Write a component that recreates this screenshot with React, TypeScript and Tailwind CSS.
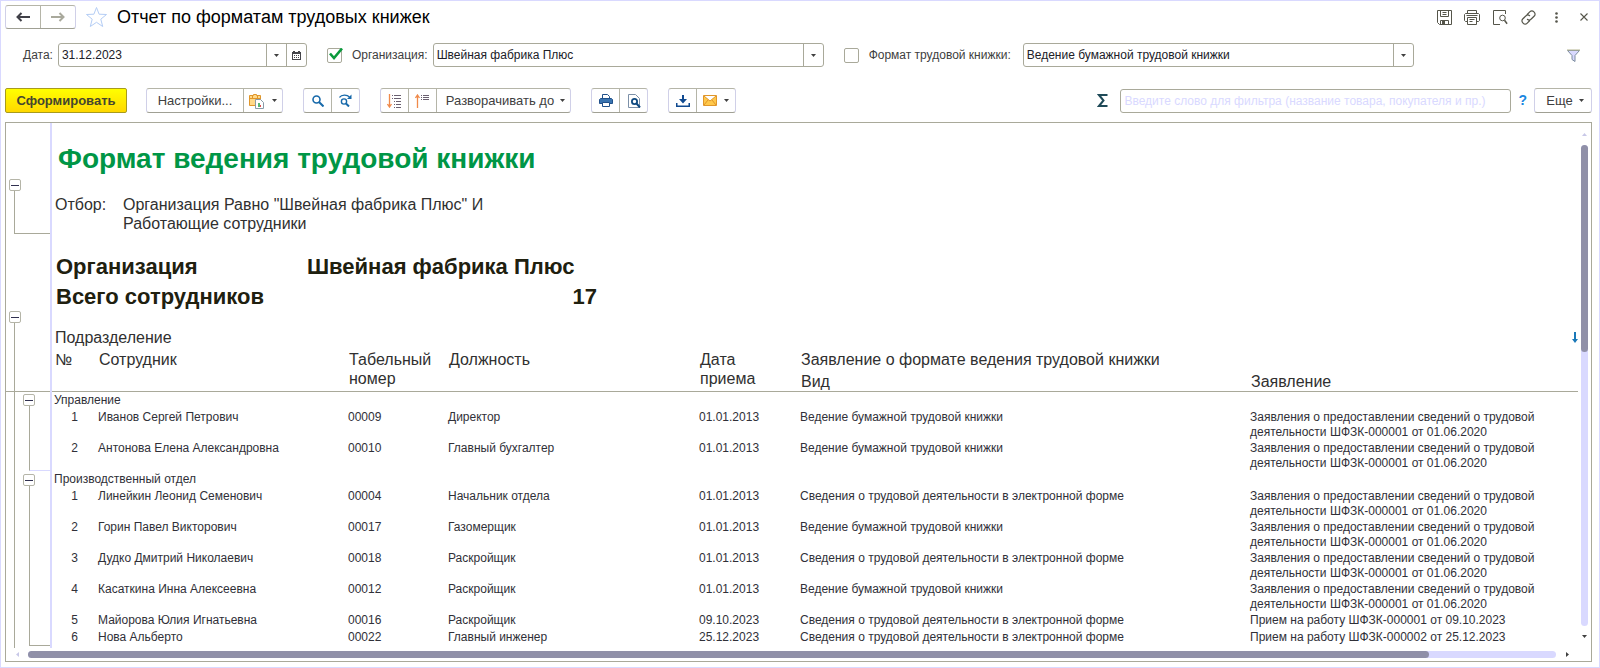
import type { ReactNode } from 'react';

type Employee = {
  name: string;
  code: string;
  position: string;
  hired: string;
  kind: string;
  statement: string[];
};

const PAPER = 'Ведение бумажной трудовой книжки';
const ELECTRONIC = 'Сведения о трудовой деятельности в электронной форме';
const REQUEST = ['Заявления о предоставлении сведений о трудовой', 'деятельности ШФЗК-000001 от 01.06.2020'];

const departments: { title: string; employees: Employee[] }[] = [
  {
    title: 'Управление',
    employees: [
      { name: 'Иванов Сергей Петрович', code: '00009', position: 'Директор', hired: '01.01.2013', kind: PAPER, statement: REQUEST },
      { name: 'Антонова Елена Александровна', code: '00010', position: 'Главный бухгалтер', hired: '01.01.2013', kind: PAPER, statement: REQUEST },
    ],
  },
  {
    title: 'Производственный отдел',
    employees: [
      { name: 'Линейкин Леонид Семенович', code: '00004', position: 'Начальник отдела', hired: '01.01.2013', kind: ELECTRONIC, statement: REQUEST },
      { name: 'Горин Павел Викторович', code: '00017', position: 'Газомерщик', hired: '01.01.2013', kind: PAPER, statement: REQUEST },
      { name: 'Дудко Дмитрий Николаевич', code: '00018', position: 'Раскройщик', hired: '01.01.2013', kind: ELECTRONIC, statement: REQUEST },
      { name: 'Касаткина Инна Алексеевна', code: '00012', position: 'Раскройщик', hired: '01.01.2013', kind: PAPER, statement: REQUEST },
      { name: 'Майорова Юлия Игнатьевна', code: '00016', position: 'Раскройщик', hired: '09.10.2023', kind: ELECTRONIC, statement: ['Прием на работу ШФЗК-000001 от 09.10.2023'] },
      { name: 'Нова Альберто', code: '00022', position: 'Главный инженер', hired: '25.12.2023', kind: ELECTRONIC, statement: ['Прием на работу ШФЗК-000002 от 25.12.2023'] },
    ],
  },
];

export default function App() {
  return (
    <div className="border border-[#d9d9ff] bg-white pt-1 pr-[7px] pb-[5px] pl-1 font-['Liberation_Sans',Arial,sans-serif] text-[13px] text-[#404040]">
      <TitleBar />
      <Filters />
      <Toolbar />
      <Report />
    </div>
  );
}

function TitleBar() {
  return (
    <header className="flex h-6 items-center">
      <ButtonGroup>
        <ToolButton label="Назад" className="w-[34px]">
          <svg width="14" height="10" viewBox="0 0 14 10" fill="none" stroke="#404048" strokeWidth="2">
            <path d="M1.5 5H14M5.5 1 1.5 5l4 4" />
          </svg>
        </ToolButton>
        <ToolButton label="Вперед" className="w-[34px]">
          <svg width="14" height="10" viewBox="0 0 14 10" fill="none" stroke="#a9a99c" strokeWidth="2">
            <path d="M12.500 5H0M8.500 1l4 4-4 4" />
          </svg>
        </ToolButton>
      </ButtonGroup>
      <button type="button" aria-label="Избранное" className="ml-[9px]">
        <svg width="23" height="22" viewBox="0 0 23 22" fill="none" stroke="#b4cdf5" strokeWidth="1">
          <path d="M11.500 1.500l2.600 6.700 7.400.3-5.700 4.700 1.900 7.300-6.200-4.200-6.200 4.200 1.900-7.300L1.500 8.500l7.400-.3z" />
        </svg>
      </button>
      <h1 className="ml-[9px] text-[18px] text-black">Отчет по форматам трудовых книжек</h1>
      <div className="ml-auto flex items-center gap-3 text-[#55554a]">
        <TitleButton label="Сохранить">
          <svg width="15" height="15" viewBox="0 0 15 15" fill="none" stroke="currentColor">
            <path d="M.5.5h14v14h-12l-2-2zM3.500.5v6h8v-6M5.500 2.500h4M5.500 4.500h4M3.500 14.500v-4h8v4" />
            <path d="M5 11h3v3H5z" fill="currentColor" stroke="none" />
          </svg>
        </TitleButton>
        <TitleButton label="Печать">
          <svg width="16" height="15" viewBox="0 0 16 15" fill="none" stroke="currentColor">
            <path d="M3.500 3.500v-3h9v3M3.500 11.500h-2l-1-1v-6l1-1h13l1 1v6l-1 1h-2M2.500 5.500h11M3.500 7.500h9v7h-9zM5.500 9.500h5M5.500 11.500h3" />
          </svg>
        </TitleButton>
        <TitleButton label="Предварительный просмотр">
          <svg width="15" height="15" viewBox="0 0 15 15" fill="none" stroke="currentColor">
            <path d="M12.500 4V.5H.5v14H7" />
            <circle cx="9.500" cy="8" r="2.800" />
            <path d="m11.500 10.200 2.600 3.600" strokeWidth="1.500" />
          </svg>
        </TitleButton>
        <TitleButton label="Ссылка">
          <svg width="15" height="15" viewBox="0 0 15 15" fill="none" stroke="currentColor" strokeWidth="1.200" strokeLinecap="round">
            <path d="M6.200 4.500 9 1.700a2.600 2.600 0 0 1 3.700 0l.6.6a2.600 2.600 0 0 1 0 3.700L10 9.200a2.600 2.600 0 0 1-3.600.1M8.800 10.500 6 13.300a2.600 2.600 0 0 1-3.700 0l-.6-.6a2.600 2.600 0 0 1 0-3.700L5 5.800a2.600 2.600 0 0 1 3.600-.1" />
          </svg>
        </TitleButton>
        <TitleButton label="Меню">
          <svg width="3" height="11" viewBox="0 0 3 11" fill="currentColor">
            <circle cx="1.500" cy="1.500" r="1.300" />
            <circle cx="1.500" cy="5.500" r="1.300" />
            <circle cx="1.500" cy="9.500" r="1.300" />
          </svg>
        </TitleButton>
        <TitleButton label="Закрыть">
          <svg width="8" height="8" viewBox="0 0 8 8" stroke="currentColor" strokeWidth="1.100">
            <path d="m.5.5 7 7m0-7-7 7" />
          </svg>
        </TitleButton>
      </div>
    </header>
  );
}

function TitleButton({ label, children }: { label: string; children: ReactNode }) {
  return (
    <button type="button" aria-label={label} className="flex w-4 justify-center">
      {children}
    </button>
  );
}

function Filters() {
  return (
    <form className="mt-[14px] flex items-center pr-3 pl-[18px] text-[12px]">
      <label htmlFor="date" className="mr-[5px]">Дата:</label>
      <div className="flex h-6 w-[249px] rounded-[3px] border border-[#a9a99a]">
        <input id="date" defaultValue="31.12.2023" className="min-w-0 flex-1 pl-[3px] text-[#202028] outline-none" />
        <button type="button" aria-label="Выбрать" className="flex w-5 items-center justify-center border-l border-[#a9a99a]">
          <Caret />
        </button>
        <button type="button" aria-label="Календарь" className="flex w-5 items-center justify-center border-l border-[#a9a99a]">
          <svg width="9" height="9" viewBox="0 0 9 9" fill="#45454a">
            <path d="M1 0h2v1h3V0h2v1h1v8H0V1h1zM1 3v5h7V3z" fillRule="evenodd" />
            <path d="M2 4h1v1H2zM4 4h1v1H4zM6 4h1v1H6zM2 6h1v1H2zM4 6h1v1H4zM6 6h1v1H6z" />
          </svg>
        </button>
      </div>

      <Tick id="org-on" label="Использовать организацию" checked />
      <label htmlFor="org" className="mr-[5px] ml-[10px]">Организация:</label>
      <SelectField id="org" value="Швейная фабрика Плюс" />

      <Tick id="format-on" label="Использовать формат" />
      <label htmlFor="format" className="mr-3 ml-[10px]">Формат трудовой книжки:</label>
      <SelectField id="format" value={PAPER} />

      <button type="button" aria-label="Фильтр" className="ml-auto">
        <svg width="13" height="13" viewBox="0 0 13 13" fill="#d9d9ff" stroke="#7c8ca0">
          <path d="M.5 1.500h12l-4.500 5v6l-3-2v-4z" />
          <path d="M0 1h13" stroke="#b5b590" />
        </svg>
      </button>
    </form>
  );
}

function Tick({ id, label, checked = false }: { id: string; label: string; checked?: boolean }) {
  return (
    <span className="relative ml-5 flex">
      <input
        id={id}
        type="checkbox"
        aria-label={label}
        defaultChecked={checked}
        className="peer size-[15px] appearance-none rounded-[2px] border border-[#a9a99a]"
      />
      <svg width="14" height="12" viewBox="0 0 14 12" fill="none" stroke="#0a9a3c" strokeWidth="2.600" className="pointer-events-none absolute bottom-[3px] left-[2px] hidden peer-checked:block">
        <path d="M1 5.500 5 10l8-9.500" />
      </svg>
    </span>
  );
}

function SelectField({ id, value }: { id: string; value: string }) {
  return (
    <div className="relative flex h-6 max-w-[391px] flex-1 rounded-[3px] border border-[#a9a99a]">
      <select id={id} className="min-w-0 flex-1 appearance-none pl-[3px] text-[#202028] outline-none">
        <option>{value}</option>
      </select>
      <span className="pointer-events-none flex w-5 items-center justify-center border-l border-[#a9a99a]">
        <Caret />
      </span>
    </div>
  );
}

function Toolbar() {
  return (
    <div className="mt-[21px] flex h-[25px] items-center">
      <button type="button" className="h-full w-[122px] rounded-[2px] border border-[#a89b1c] bg-linear-to-b from-[#ffff00] to-[#ffd800] font-bold text-[#45452f]">
        Сформировать
      </button>
      <div className="ml-[19px] flex h-full gap-5">
        <ButtonGroup>
          <ToolButton className="w-24">Настройки...</ToolButton>
          <ToolButton label="Варианты отчета" className="w-[38px] gap-[7px]">
            <svg width="16" height="16" viewBox="0 0 16 16" fill="none">
              <path d="M.5 2.500h4v-1h3v1h4v10H.5z" fill="#ffd98a" stroke="#e0962a" />
              <path d="M.5 5.500h11M3.500 3v2M8.500 3v2" stroke="#e0962a" />
              <path d="M6.500 6.500h5l3 3v6h-8z" fill="#fff" stroke="#8a9aa8" />
              <path d="M9 10h2v4H9z" fill="#58b878" />
              <path d="M11 12h1v2h-1z" fill="#e05050" />
            </svg>
            <Caret />
          </ToolButton>
        </ButtonGroup>
        <ButtonGroup>
          <ToolButton label="Найти" className="w-[27px]">
            <svg width="12" height="12" viewBox="0 0 12 12" fill="none" stroke="#1769aa">
              <circle cx="4.500" cy="4.500" r="3.500" strokeWidth="1.600" />
              <path d="m7 7 4.500 4.500" strokeWidth="2" />
            </svg>
          </ToolButton>
          <ToolButton label="Найти далее" className="w-[27px]">
            <svg width="13" height="13" viewBox="0 0 13 13" fill="none" stroke="#1769aa">
              <circle cx="5" cy="7.500" r="2.600" strokeWidth="1.400" />
              <path d="m7 9.500 3 3" strokeWidth="2" />
              <path d="M.5 3.500C2.500.5 8 .5 10.500 3" strokeWidth="1.300" />
              <path d="M12.500.5v4.500H8z" fill="#1769aa" stroke="none" />
            </svg>
          </ToolButton>
        </ButtonGroup>
        <ButtonGroup>
          <ToolButton label="Развернуть группы" className="w-[27px]">
            <svg width="15" height="14" viewBox="0 0 15 14" fill="none">
              <path d="M2.500 0v13M.5 10l2 3 2-3" stroke="#f08a4a" strokeWidth="1.300" />
              <path d="M5 1.500h1M7 1.500h7M5 4.500h1M7 4.500h7M7 7.500h1M9 7.500h5M7 10.500h1M9 10.500h5M7 13.500h1M9 13.500h5" stroke="#6a6070" />
            </svg>
          </ToolButton>
          <ToolButton label="Свернуть группы" className="w-[27px]">
            <svg width="15" height="14" viewBox="0 0 15 14" fill="none">
              <path d="M2.500 1v13M.5 4l2-3 2 3" stroke="#f08a4a" strokeWidth="1.300" />
              <path d="M6 1.500h1M8 1.500h6M6 3.500h1M8 3.500h6M6 5.500h1M8 5.500h6" stroke="#6a6070" />
            </svg>
          </ToolButton>
          <ToolButton className="w-[129px] gap-[6px] pl-1">
            Разворачивать до
            <Caret />
          </ToolButton>
        </ButtonGroup>
        <ButtonGroup>
          <ToolButton label="Печать" className="w-[27px]">
            <svg width="14" height="13" viewBox="0 0 14 13" fill="none" stroke="#20508a">
              <path d="M3.500 4.500v-4h5l2 2v2" fill="#fff" />
              <path d="M1.500 4.500h11l1 1v4H.5v-4z" fill="#3a74b0" />
              <path d="M3.500 8.500h7v4h-7z" fill="#fff" />
            </svg>
          </ToolButton>
          <ToolButton label="Предварительный просмотр" className="w-[27px]">
            <svg width="14" height="14" viewBox="0 0 14 14" fill="none">
              <path d="M1.500.5h7l4 4v9h-11z" stroke="#7c90a8" />
              <circle cx="7.500" cy="7.500" r="2.600" stroke="#104a80" strokeWidth="1.800" />
              <path d="m9.500 9.500 3.500 4" stroke="#104a80" strokeWidth="2" />
            </svg>
          </ToolButton>
        </ButtonGroup>
        <ButtonGroup>
          <ToolButton label="Сохранить" className="w-[27px]">
            <svg width="14" height="12" viewBox="0 0 14 12" fill="#104a90">
              <path d="M6 0h2v4h3L7 8.500 3 4h3z" />
              <path d="M0 8h1.500v2.500h11V8H14v4H0z" />
            </svg>
          </ToolButton>
          <ToolButton label="Отправить" className="w-[38px] gap-[7px]">
            <svg width="14" height="11" viewBox="0 0 14 11" fill="#ffc84a" stroke="#e0962a">
              <path d="M.5.5h13v10H.5zM1 1l6 5 6-5M1 10l4-5M13 10 9 5" />
            </svg>
            <Caret />
          </ToolButton>
        </ButtonGroup>
      </div>

      <svg width="11" height="13" viewBox="0 0 11 13" fill="none" stroke="#1f4a58" strokeWidth="2" className="mr-3 ml-auto">
        <path d="M10.500 1H2l4.500 5.500L2 12h8.500" />
      </svg>
      <input
        aria-label="Фильтр"
        placeholder="Введите слово для фильтра (название товара, покупателя и пр.)"
        className="h-6 w-[391px] rounded-[3px] border border-[#a9a99a] pl-[3px] text-[12px] outline-none placeholder:text-[#d9d9ff]"
      />
      <a href="#help" className="mx-[7px] text-[14px] font-bold text-[#1a86e0]">?</a>
      <ButtonGroup>
        <ToolButton className="w-[52px] gap-[6px] pl-1">
          Еще
          <Caret />
        </ToolButton>
      </ButtonGroup>
    </div>
  );
}

function ButtonGroup({ children }: { children: ReactNode }) {
  return (
    <div className="flex h-full shrink-0 divide-x divide-[#b5b5a8] rounded-[3px] border border-x-[#d0d0e8] border-t-[#b5b5a8] border-b-[#a0a094]">
      {children}
    </div>
  );
}

function ToolButton({ label, className = '', children }: { label?: string; className?: string; children: ReactNode }) {
  return (
    <button type="button" aria-label={label} className={`box-content flex items-center justify-center whitespace-nowrap ${className}`}>
      {children}
    </button>
  );
}

function Caret() {
  return (
    <svg width="5" height="3" viewBox="0 0 5 3" fill="#404040" className="shrink-0">
      <path d="M0 0h5L2.500 3z" />
    </svg>
  );
}

function Report() {
  return (
    <main className="mt-[9px] border border-[#a9a99a]">
      <div className="flex">
        <Outline />
        <div className="min-w-0 flex-1">
          <h2 className="mt-5 ml-[6px] text-[28px] leading-8 font-bold text-[#009646]">Формат ведения трудовой книжки</h2>
          <div className="mt-5 ml-[3px] flex text-[16px] leading-[19px] text-[#303030]">
            <span className="w-[68px]">Отбор:</span>
            <p>
              Организация Равно "Швейная фабрика Плюс" И
              <br />
              Работающие сотрудники
            </p>
          </div>
          <dl className="mt-[19px] ml-1 grid w-[541px] grid-cols-[251px_1fr] text-[22px] leading-[30px] font-bold text-[#20200f]">
            <dt>Организация</dt>
            <dd>Швейная фабрика Плюс</dd>
            <dt>Всего сотрудников</dt>
            <dd className="text-right">17</dd>
          </dl>
          <EmployeeTable />
        </div>
        <div className="flex w-[13px] flex-col items-center">
          <span className="flex h-[22px] items-center">
            <svg width="5" height="3" viewBox="0 0 5 3" fill="#c8c8e8"><path d="M0 3h5L2.500 0z" /></svg>
          </span>
          <div className="w-[7px] flex-1 rounded-full bg-[#d9d9ff]">
            <div className="h-[43%] rounded-full bg-[#9090a8]" />
          </div>
          <span className="flex h-[22px] items-center">
            <Caret />
          </span>
        </div>
      </div>
      <div className="flex h-[13px] items-center pr-[13px]">
        <span className="flex w-[22px] justify-center">
          <svg width="3" height="5" viewBox="0 0 3 5" fill="#c8c8e8"><path d="M3 0v5L0 2.500z" /></svg>
        </span>
        <div className="h-[7px] flex-1 rounded-full bg-[#d9d9ff]">
          <div className="h-full w-11/12 rounded-full bg-[#9090a8]" />
        </div>
        <span className="flex w-[22px] justify-center">
          <svg width="3" height="5" viewBox="0 0 3 5" fill="#404040"><path d="M0 0v5l3-2.500z" /></svg>
        </span>
      </div>
    </main>
  );
}

// Grouping levels shown left of the sheet
function Outline() {
  return (
    <div className="flex w-[46px] shrink-0 flex-col border-r-2 border-[#d9d9ff]">
      <div className="h-[269px] border-b border-[#a9a99a] pt-14 pl-[3px]">
        <Fold />
        <div className="ml-[5px] h-[43px] border-b border-l border-[#a9a99a]" />
        <div className="mt-[77px]">
          <Fold />
        </div>
        <div className="ml-[5px] h-[68px] border-l border-[#a9a99a]" />
      </div>
      <div className="ml-2 flex-1 border-l border-[#a9a99a] pt-[2px] pl-2">
        <Fold />
        <div className="ml-[6px] h-[65px] border-b border-l border-[#a9a99a] border-b-[#d9d9ff]" />
        <div className="mt-[3px]">
          <Fold />
        </div>
        <div className="ml-[6px] h-[160px] border-b border-l border-[#a9a99a]" />
      </div>
    </div>
  );
}

function Fold() {
  return (
    <button type="button" aria-label="Свернуть" className="flex size-3 items-center justify-center rounded-[2px] border border-[#b5b5a8]">
      <span className="h-px w-2 bg-[#303050]" />
    </button>
  );
}

function EmployeeTable() {
  return (
    <table className="mt-[15px] mb-[2px] w-full table-fixed border-collapse text-left text-[12px] leading-[15px] text-[#303038]">
      <colgroup>
        <col className="w-11" />
        <col className="w-[250px]" />
        <col className="w-[100px]" />
        <col className="w-[251px]" />
        <col className="w-[101px]" />
        <col className="w-[450px]" />
        <col />
      </colgroup>
      <thead className="border-b border-[#a9a99a] align-top text-[16px] leading-[19px] text-[#303030] [&_th]:pt-px [&_th]:pl-[3px] [&_th]:font-normal">
        <tr className="h-[22px]">
          <th colSpan={7}>
            <div className="flex items-center justify-between">
              Подразделение
              <svg width="6" height="11" viewBox="0 0 6 11" fill="#1a78b8">
                <path d="M2 0h2v7h2l-3 4-3-4h2z" />
              </svg>
            </div>
          </th>
        </tr>
        <tr className="h-[22px]">
          <th rowSpan={2}>№</th>
          <th rowSpan={2}>Сотрудник</th>
          <th rowSpan={2}>Табельный номер</th>
          <th rowSpan={2}>Должность</th>
          <th rowSpan={2}>Дата<br />приема</th>
          <th colSpan={2}>Заявление о формате ведения трудовой книжки</th>
        </tr>
        <tr className="h-5">
          <th>Вид</th>
          <th>Заявление</th>
        </tr>
      </thead>
      {departments.map((department) => (
        <tbody key={department.title} className="align-top [&_td]:pt-px [&_td]:pl-[2px]">
          <tr className="h-[17px]">
            <td colSpan={7}>{department.title}</td>
          </tr>
          {department.employees.map((employee, index) => (
            <tr key={employee.code} className="h-[17px]">
              <td className="pr-[18px] text-right">{index + 1}</td>
              <td>{employee.name}</td>
              <td>{employee.code}</td>
              <td>{employee.position}</td>
              <td>{employee.hired}</td>
              <td>{employee.kind}</td>
              <td>
                {employee.statement.map((line) => (
                  <div key={line}>{line}</div>
                ))}
              </td>
            </tr>
          ))}
        </tbody>
      ))}
    </table>
  );
}
